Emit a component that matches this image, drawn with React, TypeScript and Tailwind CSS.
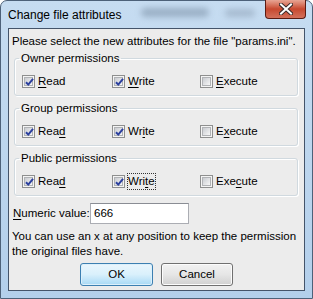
import React from 'react'

const GROUPS = [
  {
    title: 'Owner permissions',
    items: [
      { pre: '', key: 'R', post: 'ead', checked: true },
      { pre: '', key: 'W', post: 'rite', checked: true },
      { pre: '', key: 'E', post: 'xecute', checked: false },
    ],
  },
  {
    title: 'Group permissions',
    items: [
      { pre: 'Rea', key: 'd', post: '', checked: true },
      { pre: 'Wr', key: 'i', post: 'te', checked: true },
      { pre: 'E', key: 'x', post: 'ecute', checked: false },
    ],
  },
  {
    title: 'Public permissions',
    items: [
      { pre: 'Rea', key: 'd', post: '', checked: true },
      { pre: 'Wri', key: 't', post: 'e', checked: true, focus: true },
      { pre: 'Exe', key: 'c', post: 'ute', checked: false },
    ],
  },
]

function CheckBox({ checked }: { checked: boolean }) {
  return (
    <span className="w-[13px] h-[13px] shrink-0 border border-[#8e8f8f] bg-[#f4f4f4] p-[1px] flex">
      <span className="relative w-full h-full border border-[#b1b3b6] bg-gradient-to-br from-[#c9ccd1] to-[#f7f7f7]">
        {checked && (
          <svg className="absolute left-[-1px] top-[-1px]" width="11" height="11" viewBox="0 0 11 11">
            <path d="M2 5.2 L4.3 7.6 L9 1.8" fill="none" stroke="#2b3f9e" strokeWidth="2" />
          </svg>
        )}
      </span>
    </span>
  )
}

export default function App() {
  return (
    <div className="w-[313px] h-[299px] overflow-hidden font-['Liberation_Sans',Arial,sans-serif] text-[11.5px] leading-[15px] text-black">
      <div className="relative w-full h-full flex flex-col rounded-t-[7px] border border-[#4d6179] bg-gradient-to-b from-[#c6dcf1] via-[#bdd6ee] to-[#b3cfeb]">
        {/* blurred desktop behind the glass */}
        <div className="absolute left-[140px] top-[7px] w-[68px] h-[9px] rounded-full bg-[#7d92a8] blur-[3px] opacity-60" />
        <div className="absolute left-[224px] top-[8px] w-[30px] h-[8px] rounded-full bg-[#90a3b8] blur-[3px] opacity-60" />

        <div className="relative h-[27px] flex items-center pl-[7px] pt-[2px]">
          <span className="text-[12px]">Change file attributes</span>
          <div className="absolute right-[6px] top-[-1px] w-[41px] h-[19px] rounded-b-[4px] border border-[#5b1b12] border-t-0 bg-gradient-to-b from-[#e7a594] via-[#c7482f] to-[#d3705b] flex items-center justify-center">
            <svg width="14" height="12" viewBox="0 0 14 12">
              <path d="M2 1.5 L12 10.5 M12 1.5 L2 10.5" stroke="#3a2a2a" strokeWidth="4" strokeLinecap="square" />
              <path d="M2 1.5 L12 10.5 M12 1.5 L2 10.5" stroke="#ffffff" strokeWidth="2" strokeLinecap="square" />
            </svg>
          </div>
        </div>

        <div className="flex-1 mx-[7px] mb-[7px] border border-[#44546a] bg-[#ececec] flex flex-col">
          <p className="pl-[3px] pt-[5px]">Please select the new attributes for the file "params.ini".</p>

          <div className="ml-[5px] mr-[6px] mt-[2px] flex flex-col gap-[5px]">
            {GROUPS.map((g) => (
              <fieldset key={g.title} className="border border-[#d0d9df] rounded-[3px] pt-[8px] pb-[6px] shadow-[inset_1px_1px_0_#ffffff,1px_1px_0_#ffffff]">
                <legend className="ml-[4px] px-[2px]">{g.title}</legend>
                <div className="flex pl-[7px]">
                  {g.items.map((it, i) => (
                    <label key={i} className={`flex items-center gap-[3px] ${i === 0 ? 'w-[90px]' : i === 1 ? 'w-[88px]' : ''}`}>
                      <CheckBox checked={it.checked} />
                      <span className={it.focus ? 'outline outline-1 outline-dotted outline-[#333] outline-offset-0' : ''}>
                        {it.pre}
                        <span className="underline underline-offset-2">{it.key}</span>
                        {it.post}
                      </span>
                    </label>
                  ))}
                </div>
              </fieldset>
            ))}
          </div>

          <div className="flex items-center pl-[4px] mt-[7px]">
            <span className="w-[77px]">
              <span className="underline underline-offset-2">N</span>umeric value:
            </span>
            <div className="w-[99px] h-[21px] border border-[#abadb3] border-t-[#8a8d94] bg-white pl-[3px] flex items-center">666</div>
          </div>

          <p className="pl-[3px] pr-[2px] mt-[5px]">
            You can use an x at any position to keep the permission the original files have.
          </p>

          <div className="flex justify-center gap-[8px] mt-[4px]">
            <button className="w-[73px] h-[23px] rounded-[3px] border border-[#3c7fb1] bg-gradient-to-b from-[#eaf6fd] via-[#d9f0fc] to-[#a7d9f5] shadow-[inset_0_0_0_1px_#dcf0fb]">
              OK
            </button>
            <button className="w-[72px] h-[23px] rounded-[3px] border border-[#707070] bg-gradient-to-b from-[#f2f2f2] via-[#e6e6e6] to-[#d0d0d0] shadow-[inset_0_0_0_1px_#fcfcfc]">
              Cancel
            </button>
          </div>
        </div>
      </div>
    </div>
  )
}
